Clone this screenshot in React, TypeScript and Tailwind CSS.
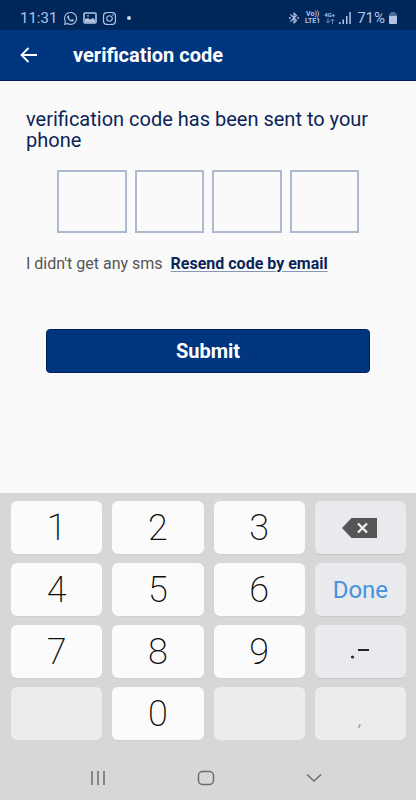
import { FaInstagram, FaWhatsapp } from "react-icons/fa";
import { MdBluetoothConnected } from "react-icons/md";

const digitKey =
  "h-[53px] rounded-md bg-[#fbfbfb] text-4xl font-extralight text-[#0c0c0c] shadow-[0_1px_0_#d0d0d0]";
const actionKey =
  "flex h-[53px] items-center justify-center rounded-md bg-[#e9eaee] shadow-[0_1px_0_#c8c8c8]";
const disabledKey = "h-[53px] rounded-md bg-[#ececec] text-[#8c8c8c]";

function StatusBar() {
  return (
    <div className="flex h-[30px] items-center justify-between bg-[#002759] pt-1.5 pr-[19px] pl-5 text-[#b3c3e3]">
      <div className="flex items-center">
        <span className="text-[15px] leading-5">11:31</span>
        <FaWhatsapp className="ml-1.5 size-[15px]" />
        <svg viewBox="0 0 14 12" className="ml-[5px] h-[12px] w-[14px]" fill="none">
          <rect x="1" y="1" width="12" height="10" rx="1" stroke="currentColor" strokeWidth="1.6" />
          <path d="M2 10.500V7l3-1 2 1.500L10 6l2 2v2.500z" fill="currentColor" />
          <circle cx="5" cy="3.800" r=".9" fill="currentColor" />
        </svg>
        <FaInstagram className="ml-[5px] size-[15px]" />
        <span className="ml-2.5 size-1 rounded-full bg-[#c9d6ee]" />
      </div>
      <div className="flex items-center">
        <MdBluetoothConnected className="size-[14px]" stroke="currentColor" />
        <div className="ml-1 text-center text-[7px] leading-[7px] font-bold">
          <div>Vo))</div>
          <div>LTE1</div>
        </div>
        <div className="ml-1 text-center text-[6px] leading-[6px] font-bold">
          <div>4G+</div>
          <svg viewBox="0 0 10 6" className="mx-auto h-[6px] w-[10px] opacity-60" fill="none" stroke="currentColor">
            <path d="M3 0v5M1 3l2 2 2-2M7.500 6V1M5.500 3l2-2 2 2" />
          </svg>
        </div>
        <svg viewBox="0 0 12 12" className="ml-1 size-[12px]" fill="currentColor">
          <path d="M0 10h1.500v2H0zM3.500 7.500h1.500V12H3.500zM7 4h1.500v8H7zM10.300 0h1.500v12h-1.500z" />
        </svg>
        <span className="ml-1.5 text-[15px] leading-5">71%</span>
        <svg viewBox="0 0 8 12" className="ml-1 h-[12px] w-[8px]" fill="currentColor">
          <path d="M2 0h4v1.500h2V4H0V1.500h2z" opacity=".45" />
          <path d="M0 4h8v7a1 1 0 0 1-1 1H1a1 1 0 0 1-1-1z" />
        </svg>
      </div>
    </div>
  );
}

function Header() {
  return (
    <header className="flex h-[51px] items-center border-b border-[#001f5c] bg-[#00357f] pl-5 text-white">
      <button type="button" aria-label="Back">
        <svg viewBox="0 0 18 16" className="h-[16px] w-[18px]" fill="none" stroke="currentColor" strokeWidth="1.800">
          <path d="M17 8H2M8.500 1l-7 7 7 7" />
        </svg>
      </button>
      <h1 className="ml-[35px] text-xl font-bold">verification code</h1>
    </header>
  );
}

function Keypad() {
  return (
    <div className="grid grid-cols-4 gap-x-2.5 gap-y-[9px] pt-2 pr-2.5 pl-[11px]">
      <button type="button" className={digitKey}>1</button>
      <button type="button" className={digitKey}>2</button>
      <button type="button" className={digitKey}>3</button>
      <button type="button" aria-label="Delete" className={actionKey}>
        <svg viewBox="0 0 36 20" className="h-[20px] w-[36px]">
          <path d="M0 10 9.500 0H35v20H9.500z" fill="#555" />
          <path d="m16 5.500 9 9m0-9-9 9" stroke="#f2f2f2" strokeWidth="2.200" />
        </svg>
      </button>
      <button type="button" className={digitKey}>4</button>
      <button type="button" className={digitKey}>5</button>
      <button type="button" className={digitKey}>6</button>
      <button type="button" className={`${actionKey} text-2xl text-[#4492e0]`}>Done</button>
      <button type="button" className={digitKey}>7</button>
      <button type="button" className={digitKey}>8</button>
      <button type="button" className={digitKey}>9</button>
      <button type="button" aria-label="Period and dash" className={actionKey}>
        <svg viewBox="0 0 20 14" className="h-[14px] w-[20px]" fill="#26262a">
          <circle cx="2.500" cy="12" r="1.600" />
          <path d="M8 4h11v2H8z" />
        </svg>
      </button>
      <button type="button" disabled aria-label="Empty" className={disabledKey} />
      <button type="button" className={digitKey}>0</button>
      <button type="button" disabled aria-label="Empty" className={disabledKey} />
      <button type="button" disabled className={`${disabledKey} pt-2.5 text-xl font-light italic`}>,</button>
    </div>
  );
}

function NavBar() {
  return (
    <nav className="flex h-[60px] items-center justify-center gap-[91px] pt-4 pr-1 text-[#6c6c6c]">
      <button type="button" aria-label="Recent apps">
        <svg viewBox="0 0 16 14" className="h-[14px] w-[16px]" fill="none" stroke="currentColor" strokeWidth="1.500">
          <path d="M2 0v14M8 0v14M14 0v14" />
        </svg>
      </button>
      <button type="button" aria-label="Home">
        <svg viewBox="0 0 18 16" className="h-[16px] w-[18px]" fill="none" stroke="currentColor" strokeWidth="1.500">
          <rect x="1.500" y="1.500" width="15" height="13" rx="4" />
        </svg>
      </button>
      <button type="button" aria-label="Hide keyboard">
        <svg viewBox="0 0 16 10" className="h-[10px] w-[16px]" fill="none" stroke="currentColor" strokeWidth="1.500">
          <path d="m1 1.500 7 6.500 7-6.500" />
        </svg>
      </button>
    </nav>
  );
}

export default function App() {
  return (
    <div className="flex min-h-screen flex-col bg-[#fafafa] font-[Roboto,sans-serif]">
      <StatusBar />
      <Header />

      <main className="flex-1 px-[26px] pt-7">
        <p className="text-xl leading-[21px] text-[#0b2558]">
          verification code has been sent to your phone
        </p>

        <div className="mx-[31px] mt-[19px] grid grid-cols-4 gap-2">
          {[1, 2, 3, 4].map((n) => (
            <input
              key={n}
              type="text"
              inputMode="numeric"
              maxLength={1}
              aria-label={`Digit ${n}`}
              className="h-[63px] w-full border-2 border-[#adb9cf] text-center text-2xl outline-none"
            />
          ))}
        </div>

        <div className="mt-5 flex items-center gap-2 text-base leading-[22px]">
          <span className="text-[#555]">I didn't get any sms</span>
          <a href="#" className="font-bold text-[#0b2558] underline decoration-[#8797b5] underline-offset-2">
            Resend code by email
          </a>
        </div>

        <div className="px-5 pt-[54px]">
          <button
            type="submit"
            className="h-11 w-full rounded border border-[#00205a] bg-[#00357f] text-xl font-bold text-white"
          >
            Submit
          </button>
        </div>
      </main>

      <footer className="bg-[#d7d7d7]">
        <Keypad />
        <NavBar />
      </footer>
    </div>
  );
}
